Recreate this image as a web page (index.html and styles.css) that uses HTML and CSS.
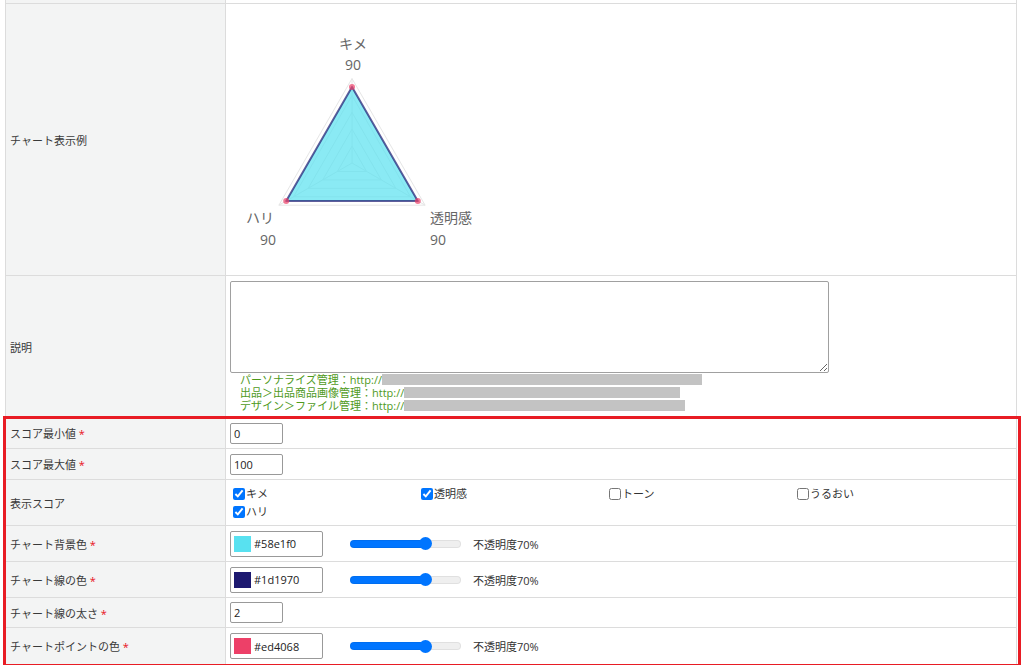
FILE: index.html
```html
<!DOCTYPE html>
<html lang="ja">
<head>
    <meta charset="UTF-8">
    <title>チャート設定</title>
    <link rel="stylesheet" href="styles.css">
</head>
<body>
    <div class="page">
        <table class="form-table">
            <tr class="row-prev">
                <th></th>
                <td></td>
            </tr>
            <tr class="row-chart">
                <th>チャート表示例</th>
                <td class="chart-cell">
                    <svg class="radar" width="260" height="271" viewBox="0 0 260 271">
                        <g class="grid">
                            <polygon points="126,74.6 52.9,201.2 199.1,201.2"/>
                            <polygon points="126,91.5 67.5,192.8 184.5,192.8"/>
                            <polygon points="126,108.4 82.2,184.3 169.8,184.3"/>
                            <polygon points="126,125.2 96.7,175.9 155.3,175.9"/>
                            <polygon points="126,142.1 111.4,167.5 140.6,167.5"/>
                            <line x1="126" y1="159" x2="126" y2="74.6"/>
                            <line x1="126" y1="159" x2="52.9" y2="201.2"/>
                            <line x1="126" y1="159" x2="199.1" y2="201.2"/>
                        </g>
                        <polygon class="area" points="126,83 60.2,197 191.8,197"/>
                        <circle class="pt" cx="126" cy="83" r="3"/>
                        <circle class="pt" cx="60.2" cy="197" r="3"/>
                        <circle class="pt" cx="191.8" cy="197" r="3"/>
                        <text x="127" y="45" text-anchor="middle">キメ</text>
                        <text x="127" y="66" text-anchor="middle">90</text>
                        <text x="48" y="219" text-anchor="end">ハリ</text>
                        <text x="50" y="241" text-anchor="end">90</text>
                        <text x="204" y="219">透明感</text>
                        <text x="204" y="241">90</text>
                    </svg>
                </td>
            </tr>
            <tr class="row-desc">
                <th>説明</th>
                <td>
                    <textarea class="desc-input"></textarea>
                    <div class="note">
                        <div class="note-line">パーソナライズ管理：http://<span class="mask mask-1"></span></div>
                        <div class="note-line">出品＞出品商品画像管理：http://<span class="mask mask-2"></span></div>
                        <div class="note-line">デザイン＞ファイル管理：http://<span class="mask mask-3"></span></div>
                    </div>
                </td>
            </tr>
            <tr class="row-small">
                <th>スコア最小値 <span class="req">*</span></th>
                <td><input type="text" class="num-input" value="0"></td>
            </tr>
            <tr class="row-small">
                <th>スコア最大値 <span class="req">*</span></th>
                <td><input type="text" class="num-input" value="100"></td>
            </tr>
            <tr class="row-score">
                <th>表示スコア</th>
                <td>
                    <div class="score-list">
                        <label><input type="checkbox" checked>キメ</label>
                        <label><input type="checkbox" checked>透明感</label>
                        <label><input type="checkbox">トーン</label>
                        <label><input type="checkbox">うるおい</label>
                        <label><input type="checkbox" checked>ハリ</label>
                    </div>
                </td>
            </tr>
            <tr class="row-color">
                <th>チャート背景色 <span class="req">*</span></th>
                <td>
                    <div class="color-line">
                        <div class="color-box"><span class="swatch swatch-bg"></span>#58e1f0</div>
                        <input type="range" class="opacity-range" value="70">
                        <span class="opacity-text">不透明度70%</span>
                    </div>
                </td>
            </tr>
            <tr class="row-color">
                <th>チャート線の色 <span class="req">*</span></th>
                <td>
                    <div class="color-line">
                        <div class="color-box"><span class="swatch swatch-line"></span>#1d1970</div>
                        <input type="range" class="opacity-range" value="70">
                        <span class="opacity-text">不透明度70%</span>
                    </div>
                </td>
            </tr>
            <tr class="row-width">
                <th>チャート線の太さ <span class="req">*</span></th>
                <td><input type="text" class="num-input" value="2"></td>
            </tr>
            <tr class="row-point">
                <th>チャートポイントの色 <span class="req">*</span></th>
                <td>
                    <div class="color-line">
                        <div class="color-box"><span class="swatch swatch-point"></span>#ed4068</div>
                        <input type="range" class="opacity-range" value="70">
                        <span class="opacity-text">不透明度70%</span>
                    </div>
                </td>
            </tr>
        </table>
        <div class="highlight"></div>
    </div>
</body>
</html>
```

FILE: styles.css
```css
body, html {
    margin: 0;
    padding: 0;
    background-color: #fff;
    font-family: 'Open Sans', 'Noto Sans CJK JP', sans-serif;
    font-size: 11px;
    color: #333;
}
.page {
    position: relative;
    padding-left: 5px;
}
.form-table {
    width: 1012px;
    border-collapse: collapse;
    table-layout: fixed;
}
.form-table th,
.form-table td {
    border: 1px solid #dcdcdc;
    padding: 0 0 0 4px;
    vertical-align: middle;
}
.form-table th {
    width: 215px;
    background-color: #f3f4f4;
    text-align: left;
    font-weight: normal;
    color: #3a3a3a;
}
.row-prev th, .row-prev td {
    border-top: none;
    height: 3px;
}
.row-chart th, .row-chart td { height: 271px; }
.row-desc th { height: 141px; }
.row-desc td { height: 136px; }
.row-small th, .row-small td { height: 30px; }
.row-score th, .row-score td { height: 45px; }
.row-color th, .row-color td { height: 35px; }
.row-width th, .row-width td { height: 29px; }
.row-point th, .row-point td { height: 36px; }

.req {
    color: #e8101c;
}

/* chart */
.form-table td.chart-cell {
    padding: 0;
}
.radar {
    display: block;
}
.radar .grid polygon,
.radar .grid line {
    fill: none;
    stroke: #e6e6e6;
    stroke-width: 1;
}
.radar .area {
    fill: rgba(88, 225, 240, 0.7);
    stroke: rgba(29, 25, 112, 0.7);
    stroke-width: 2;
    stroke-linejoin: round;
}
.radar .pt {
    fill: rgba(237, 64, 104, 0.7);
}
.radar text {
    font-family: 'Open Sans', 'Noto Sans CJK JP', sans-serif;
    font-size: 14px;
    fill: #666;
}

/* description */
.row-desc td {
    vertical-align: top;
    padding-top: 5px;
}
.desc-input {
    display: block;
    width: 599px;
    height: 92px;
    box-sizing: border-box;
    margin: 0;
    border: 1px solid #a0a0a0;
    border-radius: 2px;
}
.note {
    padding-left: 10px;
    color: #4f9a1c;
    font-size: 11px;
}
.note-line {
    height: 13px;
    line-height: 13px;
    white-space: nowrap;
}
.mask {
    display: inline-block;
    height: 11px;
    vertical-align: top;
    margin-top: 1px;
    background-color: #c3c3c3;
}
.mask-1 { width: 320px; }
.mask-2 { width: 276px; }
.mask-3 { width: 281px; }

/* inputs */
.num-input {
    width: 53px;
    height: 21px;
    box-sizing: border-box;
    margin: 0;
    padding: 0 3px;
    border: 1px solid #999;
    border-radius: 2px;
    font-family: 'Open Sans', sans-serif;
    font-size: 11px;
    color: #222;
}

.score-list {
    display: grid;
    grid-template-columns: repeat(4, 188px);
    padding-left: 3px;
    line-height: 18px;
}
.score-list label {
    display: flex;
    align-items: center;
}
.score-list input {
    width: 12px;
    height: 12px;
    margin: 0 1px 0 0;
    accent-color: #0075ff;
}

.color-line {
    display: flex;
    align-items: center;
}
.color-box {
    display: flex;
    align-items: center;
    width: 93px;
    height: 26px;
    box-sizing: border-box;
    padding-left: 3px;
    border: 1px solid #999;
    border-radius: 2px;
    color: #222;
}
.swatch {
    width: 17px;
    height: 16px;
    margin-right: 3px;
}
.swatch-bg { background-color: #58e1f0; }
.swatch-line { background-color: #1d1970; }
.swatch-point { background-color: #ed4068; }

.opacity-range {
    -webkit-appearance: none;
    appearance: none;
    width: 111px;
    height: 8px;
    margin: 0 0 0 27px;
    border-radius: 4px;
    background: linear-gradient(to right, #0075ff 0, #0075ff 68%, #efefef 68%, #efefef 100%);
    box-shadow: inset 0 0 0 1px rgba(0, 0, 0, 0.06);
}
.opacity-range::-webkit-slider-thumb {
    -webkit-appearance: none;
    width: 13px;
    height: 13px;
    border-radius: 50%;
    background-color: #0075ff;
}
.opacity-text {
    margin-left: 12px;
    color: #333;
}

.highlight {
    position: absolute;
    left: 3px;
    top: 416px;
    width: 1018px;
    height: 251px;
    box-sizing: border-box;
    border: 3px solid #e81c24;
    pointer-events: none;
}
```
